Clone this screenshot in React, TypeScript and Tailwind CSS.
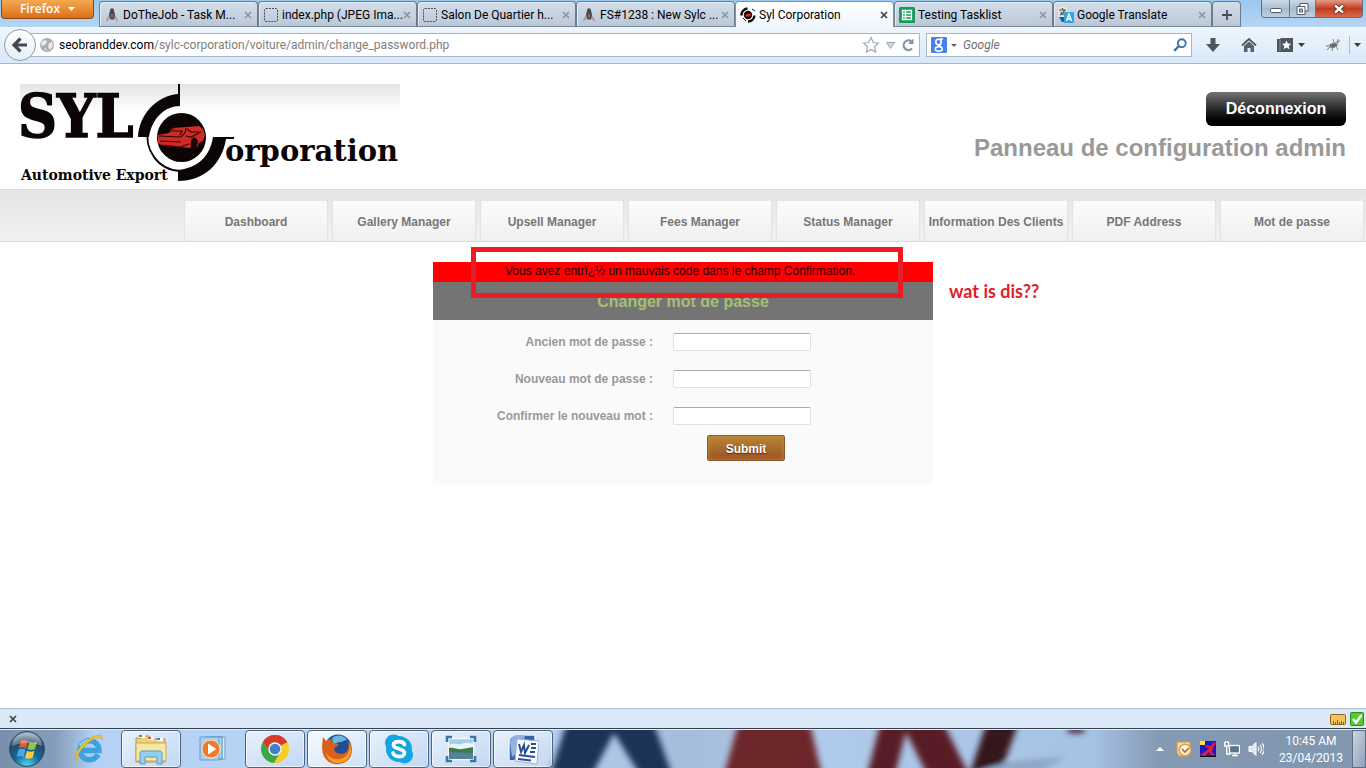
import type { ReactNode } from "react";

const ui = "font-[Roboto,'Open_Sans',sans-serif]";

function Runner() {
  return (
    <svg viewBox="0 0 16 16" className="size-4 shrink-0" aria-hidden="true">
      <path d="M2 15c0-3 1-5 3-7l3-6 3 6c2 2 3 4 3 7l-4-3H6z" fill="#a9a5a8" />
      <path d="M6 3.500c0-3 4-3 4 0l1 4-1 5H6.500L5 8z" fill="#4c484c" />
      <path d="M7 7h2l-.5 4h-1z" fill="#a66a62" />
    </svg>
  );
}

function Blank() {
  return (
    <svg viewBox="0 0 16 16" className="size-4 shrink-0" aria-hidden="true">
      <rect x="1.500" y="1.500" width="13" height="13" rx="1.500" fill="none" stroke="#4a4f55" strokeDasharray="2 1" />
    </svg>
  );
}

function SylIcon() {
  return (
    <svg viewBox="0 0 16 16" className="size-4 shrink-0" aria-hidden="true">
      <circle cx="8" cy="8" r="4.200" fill="#1a0505" />
      <path d="M5 8l3-1.500 3 .5-.5 2-4 1z" fill="#d92a23" />
      <path d="M1.500 8.500A6.500 6.500 0 0 1 7.500 1.500" fill="none" stroke="#111" strokeWidth="2.400" />
      <path d="M14.500 8.500A6.500 6.500 0 0 1 8 14.500" fill="none" stroke="#111" strokeWidth="2.400" />
      <path d="M3 11l3 3M12 2l3 2" stroke="#111" />
    </svg>
  );
}

function SheetIcon() {
  return (
    <svg viewBox="0 0 16 16" className="size-4 shrink-0" aria-hidden="true">
      <rect width="16" height="16" rx="1.500" fill="#159a59" />
      <path d="M3.500 3.500h9v9h-9zM3.500 6.500h9M3.500 9.500h9M6.500 3.500v9" fill="none" stroke="#fff" strokeWidth="1.300" />
    </svg>
  );
}

function TranslateIcon() {
  return (
    <svg viewBox="0 0 16 16" className="size-4 shrink-0" aria-hidden="true">
      <rect width="9" height="10" rx="1" fill="#e9e6dc" />
      <path d="M1 3h7M4.500 1v2M2 8c3-1 4-3 4.500-5M2.500 5c1 2 3 3 4.500 3" fill="none" stroke="#56534d" strokeWidth="1.200" />
      <path d="M1 10l3 5h5V10z" fill="#1661ae" />
      <rect x="6" y="5" width="10" height="11" rx="1" fill="#35a4e6" />
      <path d="M8.500 14L11 7l2.500 7M9.500 12h3" fill="none" stroke="#fff" strokeWidth="1.400" />
    </svg>
  );
}

type TabInfo = { title: string; icon: ReactNode; active?: boolean };

const tabs: TabInfo[] = [
  { title: "DoTheJob - Task M...", icon: <Runner /> },
  { title: "index.php (JPEG Ima...", icon: <Blank /> },
  { title: "Salon De Quartier h...", icon: <Blank /> },
  { title: "FS#1238 : New Sylc ...", icon: <Runner /> },
  { title: "Syl Corporation", icon: <SylIcon />, active: true },
  { title: "Testing Tasklist", icon: <SheetIcon /> },
  { title: "Google Translate", icon: <TranslateIcon /> },
];

function CloseMark({ dark }: { dark?: boolean }) {
  return (
    <svg viewBox="0 0 8 8" className="size-2" aria-hidden="true">
      <path d="M1 1l6 6M7 1L1 7" stroke={dark ? "#3d434b" : "#8c959f"} strokeWidth="1.700" />
    </svg>
  );
}

function TabStrip() {
  return (
    <div className="flex h-[27px] items-start bg-linear-to-b from-[#9bc8ee] to-[#b5d5f2]">
      <button
        type="button"
        className="ml-px flex h-[19px] w-[93px] shrink-0 items-center justify-center gap-2 rounded-b-sm border border-t-0 border-[#8b4a12] bg-linear-to-b from-[#f3a951] to-[#dd7011] font-['Open_Sans',sans-serif] text-xs font-semibold text-white"
      >
        Firefox
        <svg viewBox="0 0 7 4" className="h-1 w-[7px]" aria-hidden="true"><path d="M0 0h7L3.500 4z" fill="#fff" /></svg>
      </button>
      <div className="ml-[5px] flex h-[27px] min-w-0 flex-1 pt-px">
        {tabs.map((t) => (
          <div
            key={t.title}
            className={
              "flex max-w-[159px] min-w-0 flex-1 items-center rounded-t-sm border border-b-0 pr-[5px] pl-1 " +
              (t.active
                ? "border-[#7d93aa] bg-linear-to-b from-white to-[#eff6fe]"
                : "border-[#6c7d90] bg-linear-to-b from-[#d3deeb] to-[#b9c7d6] shadow-[inset_0_-1px_0_#74879b,inset_1px_1px_0_#e4ecf5]")
            }
          >
            <button type="button" className="flex min-w-0 flex-1 items-center gap-[3px] text-left text-xs whitespace-nowrap text-black">
              {t.icon}
              <span>{t.title}</span>
            </button>
            <button type="button" aria-label={"Close " + t.title} className="shrink-0">
              <CloseMark dark={t.active} />
            </button>
          </div>
        ))}
        <button
          type="button"
          aria-label="New tab"
          className="flex w-[29px] items-center justify-center rounded-t-sm border border-b-0 border-[#6c7d90] bg-linear-to-b from-[#d3deeb] to-[#b9c7d6] shadow-[inset_0_-1px_0_#74879b]"
        >
          <svg viewBox="0 0 10 10" className="size-2.5" aria-hidden="true"><path d="M5 0v10M0 5h10" stroke="#454d57" strokeWidth="1.800" /></svg>
        </button>
      </div>
      <div className="mr-[3px] flex h-[18px] overflow-hidden rounded-b-sm border border-t-0 border-[#5d6f83]">
        <button type="button" aria-label="Minimize" className="flex w-7 items-center justify-center border-r border-[#64778c] bg-linear-to-b from-[#ccdae8] via-[#a9bdd1] to-[#bccfe1]">
          <svg viewBox="0 0 12 6" className="mt-1 h-1.5 w-3" aria-hidden="true"><rect x=".5" y=".5" width="11" height="4" rx="1" fill="#fff" stroke="#525b66" /></svg>
        </button>
        <button type="button" aria-label="Restore" className="flex w-[26px] items-center justify-center border-r border-[#64778c] bg-linear-to-b from-[#ccdae8] via-[#a9bdd1] to-[#bccfe1]">
          <svg viewBox="0 0 13 12" className="h-3 w-[13px]" aria-hidden="true">
            <path d="M4 .5h8v7.500H4z" fill="#fff" stroke="#525b66" />
            <path d="M1 3.500h8v8H1z" fill="#fff" stroke="#525b66" />
            <path d="M3.500 6h3v3h-3z" fill="#a9bdd1" stroke="#525b66" />
          </svg>
        </button>
        <button type="button" aria-label="Close window" className="flex w-[46px] items-center justify-center bg-linear-to-b from-[#e39a86] via-[#c23a20] to-[#d5674a]">
          <svg viewBox="0 0 12 10" className="h-2.5 w-3" aria-hidden="true">
            <path d="M1.500 1l9 8M10.500 1l-9 8" stroke="#5b2c28" strokeWidth="4" />
            <path d="M2 1.400l8 7.200M10 1.400L2 8.600" stroke="#fff" strokeWidth="2.500" />
          </svg>
        </button>
      </div>
    </div>
  );
}

function Toolbar() {
  return (
    <div className="flex h-[37px] items-center border-b border-[#a3b8d0] bg-linear-to-b from-[#eff6fe] to-[#d9e8f8]">
      <button type="button" aria-label="Back" className="z-10 ml-1 flex size-8 shrink-0 items-center justify-center rounded-full border border-[#8b9bad] bg-linear-to-b from-white to-[#e6eef7]">
        <svg viewBox="0 0 16 16" className="size-4" aria-hidden="true">
          <path d="M8.500 1.500L2 8l6.500 6.500M2.500 8H15" fill="none" stroke="#414a54" strokeWidth="3.200" />
        </svg>
      </button>
      <div className="-ml-1.5 flex h-6 min-w-0 flex-1 items-center border border-[#a5b7cb] bg-white pl-[9px]">
        <svg viewBox="0 0 14 14" className="size-3.5 shrink-0" aria-hidden="true">
          <circle cx="7" cy="7" r="7" fill="#a9acaf" />
          <path d="M2 3l4-1 1 2-2 3-3 1-1-2zM9 5l3-1 1 4-3 4-2-3zM4 10l3 1-1 2z" fill="#e8e9ea" />
        </svg>
        <div className="ml-[5px] flex min-w-0 flex-1 text-xs whitespace-nowrap">
          <span className="text-black">seobranddev.com</span>
          <span className="text-[#808080]">/sylc-corporation/voiture/admin/change_password.php</span>
        </div>
        <svg viewBox="0 0 18 18" className="size-[18px] shrink-0" aria-hidden="true">
          <path d="M9 1.500l2.300 5 5.200.6-3.900 3.600 1.100 5.300L9 13.400 4.300 16l1.100-5.300L1.500 7.100l5.200-.6z" fill="#fdfdfd" stroke="#a4a9ae" strokeWidth="1.200" />
        </svg>
        <svg viewBox="0 0 9 7" className="ml-1.5 h-[7px] w-[9px] shrink-0" aria-hidden="true"><path d="M.5.5h8l-4 6z" fill="#d4dbe2" stroke="#9aa5b1" /></svg>
        <button type="button" aria-label="Reload" className="mr-1 ml-1.5 shrink-0">
          <svg viewBox="0 0 14 14" className="size-3.5" aria-hidden="true">
            <path d="M11 10.500A4.800 4.800 0 1 1 10.500 3.500" fill="none" stroke="#8193a8" strokeWidth="2.200" />
            <path d="M12.500.5V6H7z" fill="#8193a8" />
          </svg>
        </button>
      </div>
      <div className="ml-1.5 flex h-6 w-[266px] shrink-0 items-center border border-[#a5b7cb] bg-white pl-1">
        <svg viewBox="0 0 16 16" className="size-4 shrink-0" aria-hidden="true">
          <rect width="16" height="16" rx="1" fill="#4a80ee" />
          <circle cx="7.500" cy="5" r="2.700" fill="none" stroke="#fff" strokeWidth="1.600" />
          <ellipse cx="7.800" cy="12" rx="3.500" ry="2.200" fill="none" stroke="#fff" strokeWidth="1.500" />
          <path d="M9 2h3M8 7.500c-2 1 2 1.200 2.500 3" fill="none" stroke="#fff" strokeWidth="1.500" />
        </svg>
        <svg viewBox="0 0 6 3" className="ml-1 h-[3px] w-1.5 shrink-0" aria-hidden="true"><path d="M0 0h6L3 3z" fill="#5c646d" /></svg>
        <input aria-label="Search Google" placeholder="Google" className="ml-1.5 min-w-0 flex-1 bg-transparent text-xs italic outline-none placeholder:text-[#6f6f6f]" />
        <button type="button" aria-label="Search" className="mr-1 shrink-0">
          <svg viewBox="0 0 14 14" className="size-3.5" aria-hidden="true">
            <circle cx="8.800" cy="5.200" r="3.900" fill="none" stroke="#3c72ad" strokeWidth="1.900" />
            <path d="M6 8L1.200 12.800" stroke="#3c72ad" strokeWidth="2.400" />
          </svg>
        </button>
      </div>
      <div className="flex w-[174px] shrink-0 items-center pl-3">
        <button type="button" aria-label="Downloads" className="ml-0.5">
          <svg viewBox="0 0 14 14" className="size-3.5" aria-hidden="true"><path d="M4.500 0h5v6H14l-7 8-7-8h4.500z" fill="#4d5763" /></svg>
        </button>
        <button type="button" aria-label="Home" className="ml-[21px]">
          <svg viewBox="0 0 16 16" className="size-4" aria-hidden="true">
            <path d="M1 8.500L8 2l7 6.500" fill="none" stroke="#4d5763" strokeWidth="1.800" />
            <path d="M3 9l5-4.500L13 9v6H9.500v-4h-3v4H3z" fill="#566270" />
          </svg>
        </button>
        <button type="button" aria-label="Bookmarks" className="ml-5 flex items-center gap-1">
          <svg viewBox="0 0 16 14" className="h-3.5 w-4" aria-hidden="true">
            <path d="M0 1h3l1-1h12v14H0z" fill="#4d5763" />
            <path d="M3 2v11" stroke="#8893a0" />
            <path d="M9.500 2.500l1.400 3 3.200.3-2.400 2.200.7 3.200-2.900-1.700-2.900 1.700.7-3.200L5 5.800l3.100-.3z" fill="#fff" />
          </svg>
          <svg viewBox="0 0 7 4" className="ml-px h-1 w-[7px]" aria-hidden="true"><path d="M0 0h7L3.500 4z" fill="#343b43" /></svg>
        </button>
        <button type="button" aria-label="Firebug" className="ml-5">
          <svg viewBox="0 0 16 14" className="h-3.5 w-4" aria-hidden="true">
            <path d="M1 8l9-3 5-3-3 5-6 3z" fill="#c9c9ca" stroke="#8f8f91" strokeWidth=".7" />
            <path d="M5 6l5-1 3 2-4 3-4-1z" fill="#6e6b69" />
            <path d="M5 9l-3 3M8 9l-1 4M11 8l2 4M9 5L8 1M12 5l1-4" stroke="#6e6b69" strokeWidth=".8" />
          </svg>
        </button>
        <span className="ml-2 h-[18px] w-px bg-[#aebccb]" />
        <svg viewBox="0 0 7 4" className="ml-1 h-1 w-[7px]" aria-hidden="true"><path d="M0 0h7L3.500 4z" fill="#343b43" /></svg>
      </div>
    </div>
  );
}

function Logo() {
  return (
    <svg viewBox="0 0 380 100" className="h-[100px] w-[380px]" role="img" aria-label="Sylc Corporation, Automotive Export">
      <defs>
        <linearGradient id="sky" x1="0" y1="0" x2="0" y2="1">
          <stop offset="0" stopColor="#e4e4e4" />
          <stop offset="1" stopColor="#fff" />
        </linearGradient>
      </defs>
      <rect width="380" height="28" fill="url(#sky)" />
      <text x="-2" y="53" fontFamily="'DejaVu Serif Condensed', 'Liberation Serif', serif" fontWeight="bold" fontSize="60" fill="#0b0506" stroke="#0b0506" strokeWidth="1.500">SYL</text>
      <path d="M160 0v22C145 22 132 34 129 53H118C119 31 136 12 158 10V0z" fill="#0b0506" />
      <path d="M128 44C124 66 138 86 160 87" fill="none" stroke="#0b0506" strokeWidth="1.800" />
      <path d="M214 53v2H206C202 80 184 97 158 97V86C178 84 190 72 193 53z" fill="#0b0506" />
      <circle cx="161.500" cy="53.500" r="24.500" fill="#0d0505" />
      <path d="M138 51l11-2 3-5 14-1 13-1 4 3 2 6-2 6-4 2-2 4h-5l-3 1-8-1-18-1-5-3z" fill="#d02a26" />
      <path d="M139 52l22 1 4-4 1-5M140 57l21 1M150 47h12l-2 4M171 61c0-7 6-8 6-1M142 61l18 2 9-3M149 45h5M167 45l4 3h10M166 52l5 1 8-4" fill="none" stroke="#2b0808" strokeWidth="1.200" />
      <path d="M171 56l3-3 4 3-2 9h-5z" fill="#1b0606" />
      <text x="205" y="77" fontFamily="'DejaVu Serif', serif" fontWeight="bold" fontSize="29" fill="#0b0506">orporation</text>
      <text x="1" y="96" fontFamily="'DejaVu Serif', serif" fontWeight="bold" fontSize="14" fill="#0b0506">Automotive Export</text>
    </svg>
  );
}

const navItems = [
  "Dashboard",
  "Gallery Manager",
  "Upsell Manager",
  "Fees Manager",
  "Status Manager",
  "Information Des Clients",
  "PDF Address",
  "Mot de passe",
];

const hatch = "bg-[repeating-conic-gradient(#0000000f_0_25%,transparent_0_50%)] bg-size-[2px_2px]";

function SiteHeader() {
  return (
    <>
      <header className="flex h-[125px] items-start justify-between px-5 pt-5">
        <Logo />
        <div className="flex flex-col items-end pt-2">
          <a href="#logout" className="flex h-[34px] w-[140px] items-center justify-center rounded-md bg-linear-to-b from-[#747474] via-[#2b2b2b] to-black text-base font-bold text-white">
            Déconnexion
          </a>
          <h1 className="mt-1.5 text-2xl font-bold text-[#999]">Panneau de configuration admin</h1>
        </div>
      </header>
      <div className="border-y border-[#d9d9d9] bg-linear-to-b from-[#ebebeb] to-[#f9f9f9]">
        <nav className={"flex h-[51px] items-end justify-end " + hatch}>
          {navItems.map((n) => (
            <div key={n} className="w-[148px] px-0.5">
              <a
                href="#menu"
                className="flex h-10 items-center justify-center border-x border-[#e2e2e2] bg-linear-to-b from-[#fbfbfb] to-[#f0f0f0] pt-0.5 text-xs font-bold whitespace-nowrap text-[#777]"
              >
                {n}
              </a>
            </div>
          ))}
        </nav>
      </div>
    </>
  );
}

const fields = [
  { id: "old", label: "Ancien mot de passe" },
  { id: "new", label: "Nouveau mot de passe" },
  { id: "confirm", label: "Confirmer le nouveau mot" },
];

function PasswordForm() {
  return (
    <div className="relative mx-auto mt-5 w-[500px]">
      <p className="h-5 bg-[#ff0000] pl-[72px] text-xs leading-[18px] text-[#2a0000]">
        Vous avez entrï¿½ un mauvais code dans le champ Confirmation.
      </p>
      <h2 className="flex h-[38px] items-center justify-center bg-[#747474] pt-0.5 text-base font-bold text-[#a5bf75]">Changer mot de passe</h2>
      <form className="bg-[#fafafa] pt-[13px] pb-[23px]" onSubmit={(e) => e.preventDefault()}>
        <div className="flex flex-col gap-[19px]">
          {fields.map((f) => (
            <div key={f.id} className="flex h-[18px] items-center gap-5">
              <label htmlFor={f.id} className="w-[220px] text-right text-xs font-bold text-[#999]">
                {f.label} :
              </label>
              <input id={f.id} type="password" className="h-[18px] w-[138px] rounded-xs border border-[#dfe3e9] border-t-[#a9abb2] bg-white px-1 text-xs outline-none" />
            </div>
          ))}
        </div>
        <button
          type="submit"
          className="mt-2.5 ml-[274px] block h-[26px] w-[78px] rounded-xs border border-[#8d5a2c] bg-linear-to-b from-[#b88735] to-[#9a4f26] pt-0.5 text-xs font-bold text-white shadow-[inset_0_0_5px_#c0883c] text-shadow-[0_1px_1px_#4a2510]"
        >
          Submit
        </button>
      </form>
      <div className="pointer-events-none absolute -top-[15px] left-[38px] h-[51px] w-[432px] border-5 border-[#ed1c24]" />
      <p className="absolute top-[17px] left-[516px] font-[Lato,sans-serif] text-lg leading-6 font-bold whitespace-nowrap text-[#e02027]">wat is dis??</p>
    </div>
  );
}

function AddonBar() {
  return (
    <div className="flex h-[21px] items-center justify-between border-t border-[#aebccb] bg-[#dae8f7] pr-0.5 pl-[9px]">
      <button type="button" aria-label="Close add-on bar"><CloseMark dark /></button>
      <div className="flex items-center gap-1">
        <svg viewBox="0 0 16 11" className="h-[11px] w-4" aria-hidden="true">
          <rect x=".5" y=".5" width="15" height="10" rx="1" fill="#f3c45c" stroke="#8b6421" />
          <path d="M3.500 10V7M5.500 10V8M7.500 10V6M9.500 10V8M11.500 10V7M13.500 10V8" stroke="#8b6421" />
        </svg>
        <svg viewBox="0 0 14 14" className="size-3.5" aria-hidden="true">
          <rect x=".5" y=".5" width="13" height="13" rx="1" fill="#58c92f" stroke="#2f8a1b" />
          <path d="M3 7l3 3.500L11.500 3" fill="none" stroke="#fff" strokeWidth="2.400" />
        </svg>
      </div>
    </div>
  );
}

function StartOrb() {
  return (
    <svg viewBox="0 0 36 36" className="size-9" aria-hidden="true">
      <defs>
        <radialGradient id="orb" cx=".5" cy="1" r="1">
          <stop offset="0" stopColor="#4fe1f5" />
          <stop offset=".4" stopColor="#17679c" />
          <stop offset=".75" stopColor="#274761" />
          <stop offset="1" stopColor="#a9bccb" />
        </radialGradient>
      </defs>
      <circle cx="18" cy="18" r="17.300" fill="url(#orb)" stroke="#26415c" />
      <path d="M12 10c3-1.500 5-1 7 .3l-2 7.200c-2-1.300-5-1.600-7-.3z" fill="#ea5a2a" />
      <path d="M20.500 11c2.500 1 5 1 7.500-.5l-2 7.500c-2.500 1.500-5 1.300-7.500 0z" fill="#8fc63f" />
      <path d="M9.500 18.700c2.500-1.300 5-1 7 .3l-2 7.200c-2-1.300-4.500-1.500-7-.2z" fill="#4ba8e8" />
      <path d="M18 19.700c2.500 1.300 5 1.300 7.500 0l-2 7c-2.500 1.500-5 1.300-7.500 0z" fill="#fccb39" />
      <path d="M3 15C4 5 13 2 18 2s14 3 15 13c-8-4-22-4-30 0z" fill="#fff" opacity=".3" />
    </svg>
  );
}

const apps: { name: string; open?: boolean; lit?: boolean; icon: ReactNode }[] = [
  {
    name: "Internet Explorer",
    icon: (
      <svg viewBox="0 0 32 32" className="size-8" aria-hidden="true">
        <path d="M25 21.500A9.500 9.500 0 1 1 26 17.500H9" fill="none" stroke="#3aa3e0" strokeWidth="5.500" />
        <path d="M7 13A10 10 0 0 1 16 7" fill="none" stroke="#8fd4f5" strokeWidth="2" />
        <path d="M4 28C-1 23 9 8 22 3c6-2 8 0 7 4-1-3-4-3-8-1C12 10 3 21 4 28z" fill="#f4c42f" stroke="#d89d1b" strokeWidth=".6" />
      </svg>
    ),
  },
  {
    name: "Windows Explorer",
    open: true,
    icon: (
      <svg viewBox="0 0 32 32" className="size-8" aria-hidden="true">
        <path d="M1 5h6l1-2h6l1 3h15v23H1z" fill="#ecd07e" stroke="#b9934a" />
        <path d="M4 2h6v3H4zM13 4h6v3h-6zM22 5h6v3h-6z" fill="#fff" />
        <path d="M4 2h3v2H4z" fill="#3a9c42" />
        <path d="M13 4h3v2h-3z" fill="#d94a3d" />
        <path d="M22 5h3v2h-3z" fill="#3b86cf" />
        <path d="M1 10h30v18H1z" fill="#f8e6a5" stroke="#c9a75a" />
        <path d="M5 31V20c0-1 1-2 2-2h18c1 0 2 1 2 2v11h-5v-7H10v7z" fill="#93cfee" stroke="#5a9cc4" />
      </svg>
    ),
  },
  {
    name: "Media Player",
    icon: (
      <svg viewBox="0 0 32 32" className="size-8" aria-hidden="true">
        <path d="M12 4h16v22H12z" fill="#d5e9f6" stroke="#6b9fc4" />
        <path d="M8 4h17v22H8z" fill="#b8daf0" stroke="#4f8ab4" />
        <path d="M3 4h19v23H3z" fill="#a8d0ea" stroke="#6b9fc4" />
        <circle cx="14" cy="16" r="9" fill="#ee7a25" stroke="#fbe2c8" />
        <path d="M11 10.500l8.500 5.500-8.500 5.500z" fill="#fff" />
      </svg>
    ),
  },
  {
    name: "Chrome",
    open: true,
    icon: (
      <svg viewBox="0 0 32 32" className="size-8" aria-hidden="true">
        <circle cx="16" cy="16" r="14" fill="#f5cf29" />
        <path d="M16 16L3.900 9A14 14 0 0 1 28.100 9z" fill="#d93a2f" />
        <path d="M16 9.500H28.400A14 14 0 0 0 3.900 9L10 18z" fill="#d93a2f" />
        <path d="M3.900 9A14 14 0 0 0 15 30l6.500-11.500-5.500 3-5.600-3z" fill="#3ea64a" />
        <circle cx="16" cy="16" r="6.700" fill="#f5f5f5" />
        <circle cx="16" cy="16" r="5.300" fill="#3d82c9" />
      </svg>
    ),
  },
  {
    name: "Firefox",
    open: true,
    lit: true,
    icon: (
      <svg viewBox="0 0 32 32" className="size-8" aria-hidden="true">
        <circle cx="17" cy="15" r="13.500" fill="#1e4f97" />
        <path d="M11 5c5-4 12-3 15 2-3 0-4 2-7 2s-4 3-7 1z" fill="#69b5e5" />
        <path d="M2 4l3 4c1-1 3-2 5-2l2 4 5 1c1 1-1 3-4 4 0 6 9 8 13 3 2-3 2-6 1-10 5 5 5 13 1 18C22 33 9 33 4 25 0 19 1 11 2 4z" fill="#db5f18" />
        <path d="M28 9c2 8-1 15-9 17-7 1-12-2-14-7 1 9 9 13 17 10 8-3 10-13 6-20z" fill="#f3a12b" />
      </svg>
    ),
  },
  {
    name: "Skype",
    open: true,
    icon: (
      <svg viewBox="0 0 32 32" className="size-8" aria-hidden="true">
        <circle cx="10.500" cy="10" r="8.500" fill="#12a5e4" />
        <circle cx="21.500" cy="22" r="8.500" fill="#12a5e4" />
        <circle cx="16" cy="16" r="13" fill="#12a5e4" />
        <path d="M21.500 11.500c-1.500-4-11-4-11 .5s11 3 11 8-10 4.500-11.500 0" fill="none" stroke="#fff" strokeWidth="3.700" strokeLinecap="round" />
      </svg>
    ),
  },
  {
    name: "Pictures",
    open: true,
    icon: (
      <svg viewBox="0 0 32 28" className="h-7 w-8" aria-hidden="true">
        <rect x="3.500" y="3.500" width="25" height="21" fill="#9fcdf0" stroke="#f4f8fb" strokeWidth="1.500" />
        <path d="M4 10c5-3 8 0 12-1s8-2 12 0v5H4z" fill="#e8f3fa" />
        <path d="M4 13c5-1 9 2 13 1s8-1 11-2v6H4z" fill="#3f7d3e" />
        <path d="M4 17l24 1v6H4z" fill="#55839d" />
        <path d="M2 7V2h5M25 2h5v5M30 21v5h-5M7 26H2v-5" fill="none" stroke="#3877ac" strokeWidth="2.600" />
      </svg>
    ),
  },
  {
    name: "Word",
    open: true,
    icon: (
      <svg viewBox="0 0 32 32" className="size-8" aria-hidden="true">
        <path d="M2 28V10C2 5 5 2 10 2h18v25z" fill="#3562a9" stroke="#e9f1fb" strokeWidth="1.500" />
        <path d="M5 24c6-4 12-12 13-22H10C6 2 3 6 3 10z" fill="#90b3e2" />
        <path d="M10 6l22 2-2 23-22-3z" fill="#f8fafd" stroke="#9db2d0" />
        <path d="M12 11l2 8 3-7 1 8 4-8" fill="none" stroke="#2b4f96" strokeWidth="2" />
        <path d="M24 11h5M24 15h5M23 19h5M12 22l16 2M11 26l13 1.500" stroke="#2b4f96" strokeWidth="1.800" />
      </svg>
    ),
  },
];

function Taskbar() {
  return (
    <div className="relative flex h-[39px] items-stretch overflow-hidden border-t border-[#e3edf8] bg-[#b0caeb] shadow-[0_-1px_0_#34404e]">
      <svg viewBox="0 0 1366 39" preserveAspectRatio="none" className="absolute inset-0 h-full w-full" aria-hidden="true">
        <defs>
          <filter id="soft" x="-5%" y="-50%" width="110%" height="200%"><feGaussianBlur stdDeviation="3" /></filter>
          <linearGradient id="wall" x1="0" x2="1" y1="0" y2="0">
            <stop offset="0" stopColor="#7990ac" />
            <stop offset=".04" stopColor="#859cba" />
            <stop offset=".07" stopColor="#b5d2f5" />
            <stop offset=".4" stopColor="#b6d0f0" />
            <stop offset=".5" stopColor="#a5bcda" />
            <stop offset=".6" stopColor="#b0caeb" />
            <stop offset=".8" stopColor="#a6c2e4" />
            <stop offset=".85" stopColor="#8499b3" />
            <stop offset="1" stopColor="#8296af" />
          </linearGradient>
        </defs>
        <rect width="1366" height="39" fill="url(#wall)" />
        <g filter="url(#soft)">
          <path d="M566-6h88l18 52h-32L614 3 592 46h-42z" fill="#1d3056" />
          <path d="M738-6h72l12 52H724z" fill="#6d282b" />
          <path d="M880-6h64l25 52h-42L906 2 895 46h-28z" fill="#581f27" />
          <path d="M986-6h32l-14 40-34 10z" fill="#34151f" />
          <path d="M972 46l34-13 60-6-30 19z" fill="#8ea8c6" />
          <path d="M1068-4h16v8h-16z" fill="#5a4453" />
        </g>
      </svg>
      <button type="button" aria-label="Start" className="relative ml-[9px] w-[50px] shrink-0"><StartOrb /></button>
      <div className="relative flex gap-0.5">
        {apps.map((a) => (
          <button
            key={a.name}
            type="button"
            aria-label={a.name}
            className={
              "flex w-[60px] items-center justify-center " +
              (a.open
                ? a.lit
                  ? "rounded-sm border border-[#4d637d] bg-linear-to-br from-white/90 to-[#d4e6fa]/80 shadow-[inset_0_0_0_1px_#ffffffcc]"
                  : "rounded-sm border border-[#4d637d] bg-linear-to-br from-white/70 to-white/15 shadow-[inset_0_0_0_1px_#ffffff99]"
                : "")
            }
          >
            {a.icon}
          </button>
        ))}
      </div>
      <div className="relative ml-auto flex items-center text-white">
        <svg viewBox="0 0 8 4" className="h-1 w-2" aria-hidden="true"><path d="M0 4h8L4 0z" fill="#fff" /></svg>
        <svg viewBox="0 0 16 16" className="ml-3 size-4" aria-hidden="true">
          <path d="M1 1h13v4l-3 10H3L1 12z" fill="#f6d9a3" stroke="#de983a" />
          <circle cx="9" cy="9" r="5.800" fill="#fbf1dc" stroke="#e4a044" strokeWidth="1.600" />
          <path d="M6 8l3 3 4-4" fill="none" stroke="#96713b" strokeWidth="1.600" />
        </svg>
        <svg viewBox="0 0 16 16" className="ml-2 size-4" aria-hidden="true">
          <rect width="16" height="16" fill="#1919cf" />
          <path d="M0 0h5v4H0z" fill="#ffe536" />
          <path d="M0 14l5-3 4-4-4-1 1-2 5 1 2-3 3-1-3 6-1 4 3 3h-4l-2-3-4 4z" fill="#e81d2d" />
          <path d="M0 15.500h16" stroke="#111" />
        </svg>
        <svg viewBox="0 0 16 16" className="ml-2 size-4" aria-hidden="true">
          <rect x="5.500" y="4.500" width="10" height="7.500" fill="#5e7288" stroke="#fff" strokeWidth="1.300" />
          <path d="M8 14.500h6M11 12v2M.7 1v4h4V1M2.700 5v8h4M1.700 0v2M3.700 0v2" fill="none" stroke="#fff" strokeWidth="1.300" />
        </svg>
        <svg viewBox="0 0 16 16" className="ml-2 size-4" aria-hidden="true">
          <path d="M1 5.500h3l4-4v13l-4-4H1z" fill="#dfe6ee" stroke="#fff" />
          <path d="M10 6c1 1 1 3 0 4M12 4c2 2 2 6 0 8M14 2.500c3 3 3 8 0 11" fill="none" stroke="#fff" strokeWidth="1.100" />
        </svg>
        <div className="flex w-[88px] flex-col items-center pt-0.5 pr-0.5 pl-2 text-xs leading-[17px] whitespace-nowrap">
          <span>10:45 AM</span>
          <span>23/04/2013</span>
        </div>
        <button type="button" aria-label="Show desktop" className="h-full w-[14px] border border-[#5a7086] bg-linear-to-br from-white/60 to-white/10" />
      </div>
    </div>
  );
}

export default function App() {
  return (
    <div className="flex min-h-screen flex-col bg-white">
      <div className={ui}>
        <TabStrip />
        <Toolbar />
      </div>
      <div className="flex-1 font-['Liberation_Sans',Arial,sans-serif]">
        <SiteHeader />
        <main><PasswordForm /></main>
      </div>
      <div className={ui}>
        <AddonBar />
        <Taskbar />
      </div>
    </div>
  );
}
